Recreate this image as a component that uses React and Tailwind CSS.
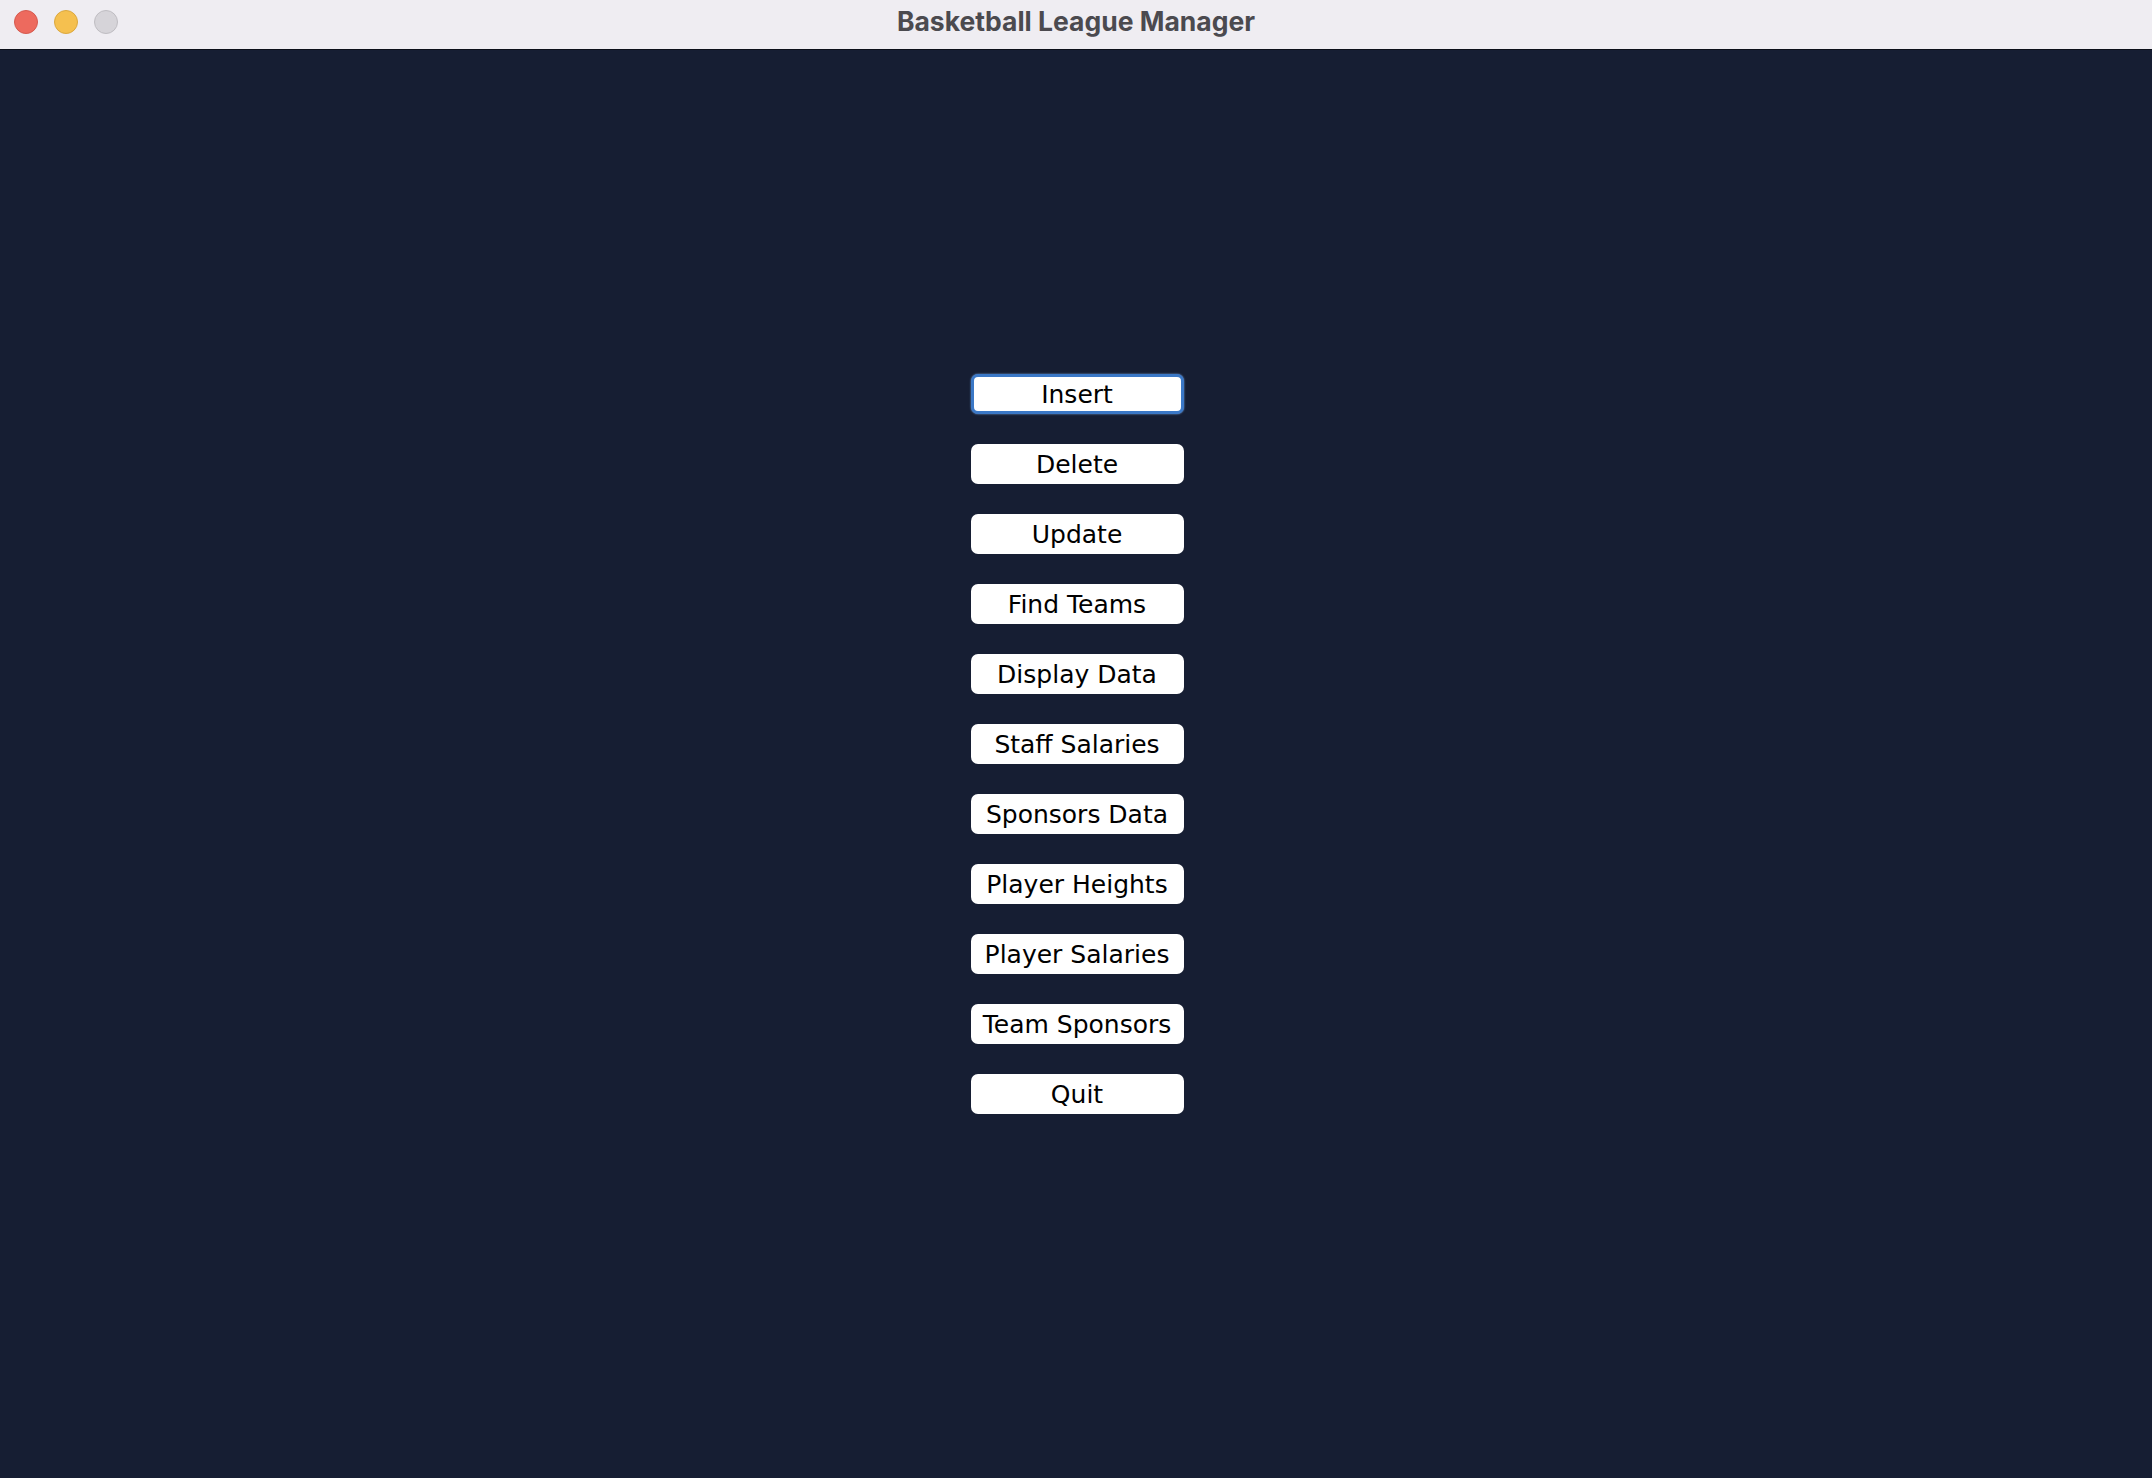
export default function App() {
  const items = [
    "Insert",
    "Delete",
    "Update",
    "Find Teams",
    "Display Data",
    "Staff Salaries",
    "Sponsors Data",
    "Player Heights",
    "Player Salaries",
    "Team Sponsors",
    "Quit",
  ];
  return (
    <div className="w-[2152px] h-[1478px] flex flex-col bg-[#161e33] overflow-hidden">
      <div className="h-[50px] shrink-0 bg-[#efedf2] border-b border-[#0c0f1a] relative flex items-center justify-center">
        <div className="absolute left-[14px] top-[10px] flex gap-[16px]">
          <div className="w-[24px] h-[24px] rounded-full bg-[#ed6a5e] border border-[#d55a4f]" />
          <div className="w-[24px] h-[24px] rounded-full bg-[#f5c04f] border border-[#dba83f]" />
          <div className="w-[24px] h-[24px] rounded-full bg-[#d6d4d9] border border-[#bfbdc2]" />
        </div>
        <span className="text-[26.5px] font-bold text-[#4b4a4f] font-['Inter',sans-serif] leading-none pb-[6px]">
          Basketball League Manager
        </span>
      </div>
      <div className="flex flex-col items-center pt-[324px] gap-[30px]">
        {items.map((t, i) => (
          <button
            key={t}
            className={
              i === 0
                ? "w-[213px] h-[40px] ml-[2px] rounded-[7px] bg-white text-black text-[25px] font-['DejaVu_Sans',sans-serif] leading-none flex items-center justify-center border-[3px] border-[#3b78c6] shadow-[0_0_2px_#7aa7e0]"
                : "w-[213px] h-[40px] ml-[2px] rounded-[7px] bg-white text-black text-[25px] font-['DejaVu_Sans',sans-serif] leading-none flex items-center justify-center"
            }
          >
            {t}
          </button>
        ))}
      </div>
    </div>
  );
}
